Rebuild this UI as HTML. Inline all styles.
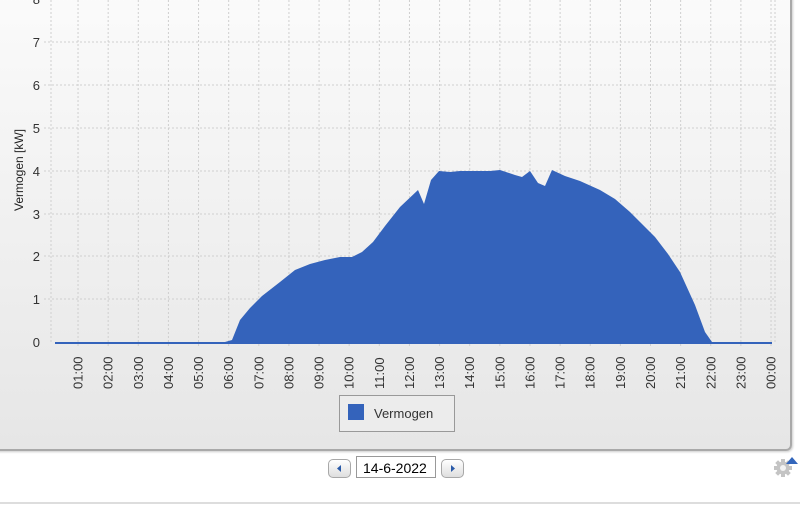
<!DOCTYPE html>
<html><head><style>
body{margin:0;width:800px;height:505px;overflow:hidden;background:#fff;font-family:"Liberation Sans",sans-serif;position:relative}
#panel{position:absolute;left:-10px;top:-10px;width:800px;height:459px;border:2px solid #a9a9a9;border-top:none;border-left:none;border-radius:0 0 6px 0;background:linear-gradient(#fbfbfb,#e6e6e6);box-shadow:1px 1px 2px rgba(0,0,0,.2)}
.btn{position:absolute;top:459px;width:21px;height:17px;border:1px solid #a8a8a8;border-radius:5px;background:linear-gradient(#fff,#dedede)}
#date{position:absolute;left:356px;top:456px;height:22px;border:1px solid #999;background:#fff;font-size:14px;line-height:22px;padding-left:6px;box-sizing:border-box;width:80px}
</style></head><body>
<div id="panel"></div>
<svg width="800" height="505" style="position:absolute;left:0;top:0">
<g stroke="#cfcfcf" stroke-dasharray="2,2" stroke-width="1">
<line x1="51" y1="0" x2="51" y2="342"/>
<line x1="775" y1="0" x2="775" y2="342"/>
<line x1="44" y1="42" x2="775" y2="42"/>
<line x1="44" y1="85" x2="775" y2="85"/>
<line x1="44" y1="128" x2="775" y2="128"/>
<line x1="44" y1="171" x2="775" y2="171"/>
<line x1="44" y1="214" x2="775" y2="214"/>
<line x1="44" y1="256" x2="775" y2="256"/>
<line x1="44" y1="299" x2="775" y2="299"/>
<g id="v"></g>
</g>
<path fill="#3463bb" d="M55,342 L225,342 L232,340 L240,320 L250,308 L262,296 L280,282 L295,270 L310,264 L325,260 L340,257 L352,257 L362,252 L373,242 L385,226 L400,207 L418,190 L424,204 L431,180 L439,171 L450,172 L460,171 L490,171 L500,170 L515,175 L522,177 L530,171 L538,183 L545,186 L552,170 L565,176 L580,181 L600,190 L615,199 L630,212 L640,222 L655,237 L668,254 L680,272 L695,305 L705,332 L712,342 L772,342 L772,344 L55,344Z"/>
<g font-size="13" fill="#333" text-anchor="end">
<text x="40" y="4">8</text><text x="40" y="47">7</text><text x="40" y="90">6</text><text x="40" y="133">5</text><text x="40" y="176">4</text><text x="40" y="219">3</text><text x="40" y="261">2</text><text x="40" y="304">1</text><text x="40" y="347">0</text>
</g>
<text transform="translate(23,170) rotate(-90)" font-size="12" fill="#222" text-anchor="middle">Vermogen [kW]</text>
<g id="t" font-size="13" fill="#333"></g>
<rect x="339.5" y="395.5" width="115" height="36" fill="#ececec" stroke="#999"/>
<rect x="348" y="404" width="16" height="16" fill="#3463bb"/>
<text x="374" y="418" font-size="13" fill="#333">Vermogen</text>
<line x1="0" y1="503" x2="800" y2="503" stroke="#ddd" stroke-width="2"/>
<g transform="translate(783,468)" fill="#c4c4c4">
<rect x="-2" y="-9" width="4" height="18"/><rect x="-2" y="-9" width="4" height="18" transform="rotate(45)"/><rect x="-2" y="-9" width="4" height="18" transform="rotate(90)"/><rect x="-2" y="-9" width="4" height="18" transform="rotate(135)"/>
<circle r="6.5"/><circle r="3" fill="#f2f2f2"/></g>
<path d="M786,464 L792,457 L798,464Z" fill="#3366bb"/>
</svg>
<div class="btn" style="left:328px"><svg width="21" height="17"><path d="M12,5 L8,8.5 L12,12Z" fill="#2a5aa8"/></svg></div>
<div id="date">14-6-2022</div>
<div class="btn" style="left:441px"><svg width="21" height="17"><path d="M9,5 L13,8.5 L9,12Z" fill="#2a5aa8"/></svg></div>
<script>
var v=document.getElementById('v'),t=document.getElementById('t'),ns='http://www.w3.org/2000/svg';
for(var h=1;h<=24;h++){var x=47.9+30.13*h;
var l=document.createElementNS(ns,'line');l.setAttribute('x1',x);l.setAttribute('x2',x);l.setAttribute('y1',0);l.setAttribute('y2',348);v.appendChild(l);
var s=document.createElementNS(ns,'text');s.setAttribute('transform','translate('+(x+4.5)+',389) rotate(-90)');s.textContent=(h%24<10?'0':'')+(h%24)+':00';t.appendChild(s);}
</script>
</body></html>
